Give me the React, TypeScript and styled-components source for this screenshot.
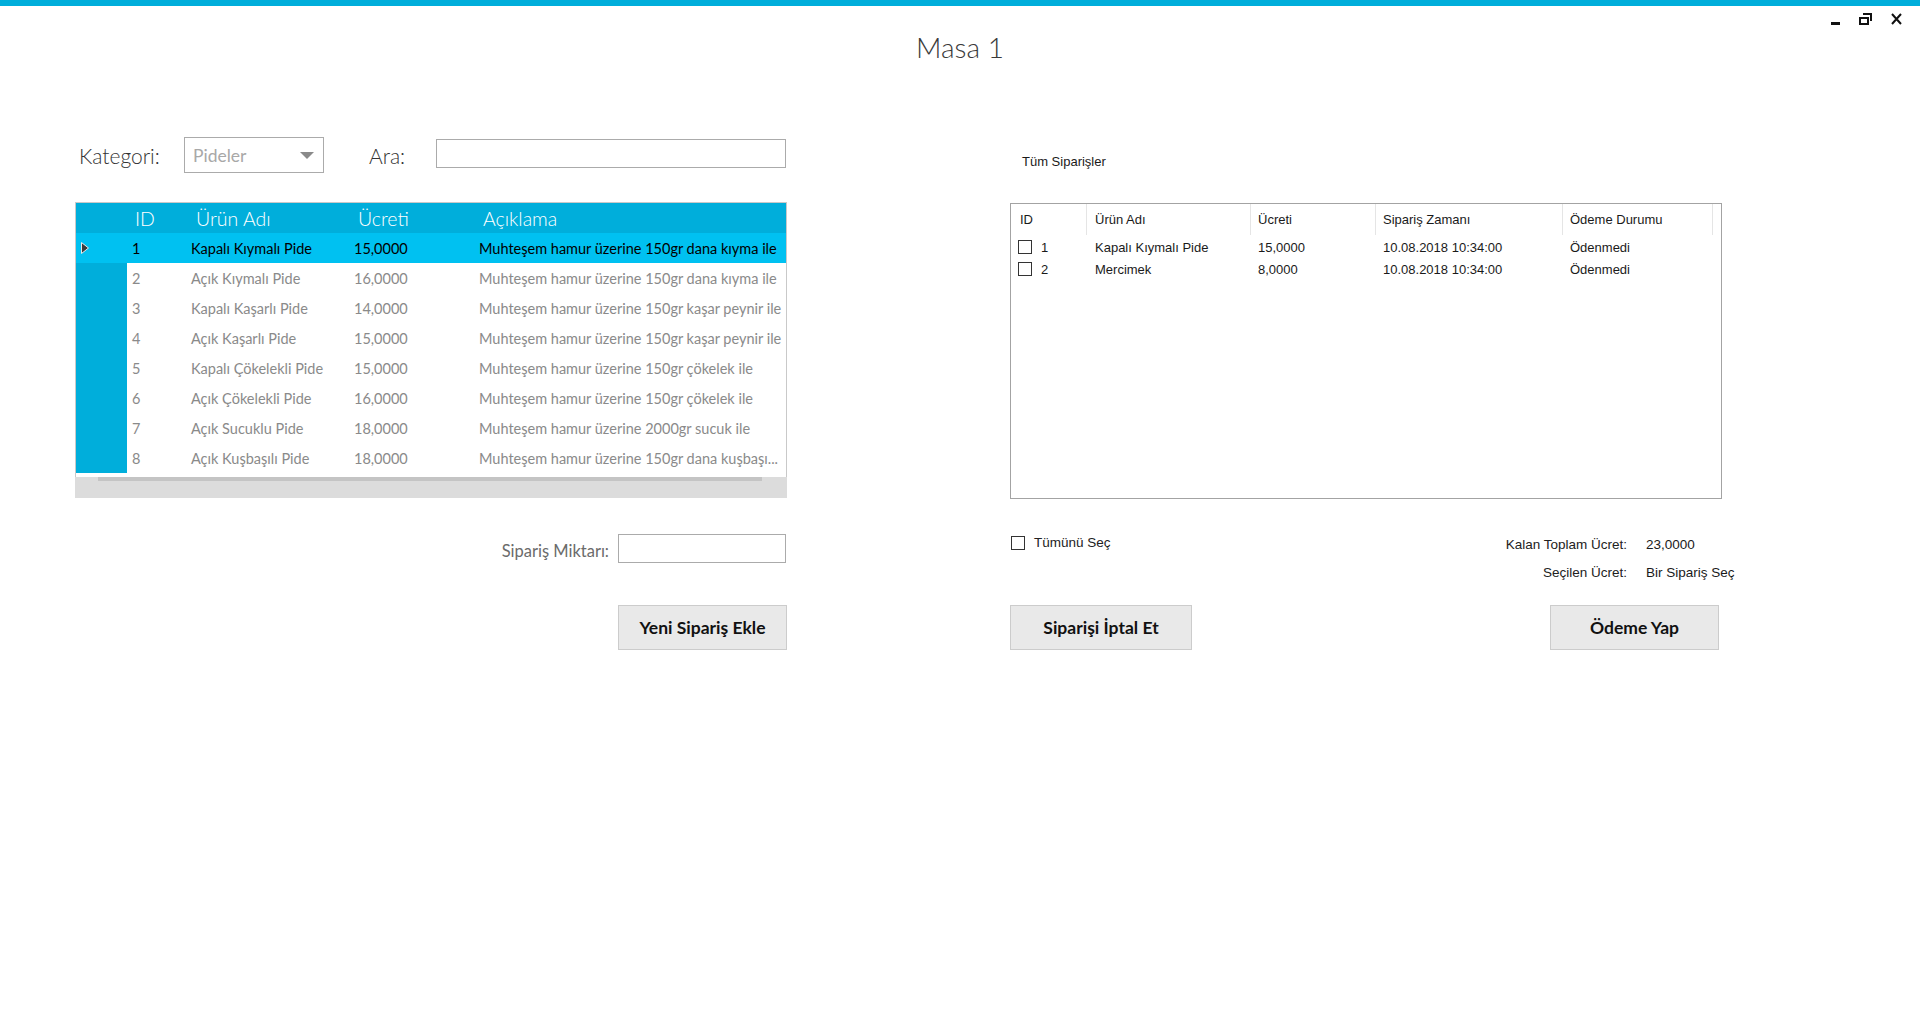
import React from "react"
import styled, { createGlobalStyle } from "styled-components"

const BLUE = "#00aedb"
const SELECTED = "#00c1f1"

const GlobalStyle = createGlobalStyle`
  html, body {
    margin: 0;
    padding: 0;
    background: #fff;
  }
  body {
    width: 1920px;
    height: 1030px;
    overflow: hidden;
    font-family: Lato, "Open Sans", sans-serif;
  }
  * {
    box-sizing: border-box;
  }
`

const products = [
  { id: 1, name: "Kapalı Kıymalı Pide", price: "15,0000", desc: "Muhteşem hamur üzerine 150gr dana kıyma ile" },
  { id: 2, name: "Açık Kıymalı Pide", price: "16,0000", desc: "Muhteşem hamur üzerine 150gr dana kıyma ile" },
  { id: 3, name: "Kapalı Kaşarlı Pide", price: "14,0000", desc: "Muhteşem hamur üzerine 150gr kaşar peynir ile" },
  { id: 4, name: "Açık Kaşarlı Pide", price: "15,0000", desc: "Muhteşem hamur üzerine 150gr kaşar peynir ile" },
  { id: 5, name: "Kapalı Çökelekli Pide", price: "15,0000", desc: "Muhteşem hamur üzerine 150gr çökelek ile" },
  { id: 6, name: "Açık Çökelekli Pide", price: "16,0000", desc: "Muhteşem hamur üzerine 150gr çökelek ile" },
  { id: 7, name: "Açık Sucuklu Pide", price: "18,0000", desc: "Muhteşem hamur üzerine 2000gr sucuk ile" },
  { id: 8, name: "Açık Kuşbaşılı Pide", price: "18,0000", desc: "Muhteşem hamur üzerine 150gr dana kuşbaşı..." },
]

const orders = [
  { id: 1, name: "Kapalı Kıymalı Pide", price: "15,0000", time: "10.08.2018 10:34:00", status: "Ödenmedi" },
  { id: 2, name: "Mercimek", price: "8,0000", time: "10.08.2018 10:34:00", status: "Ödenmedi" },
]

// list view column widths (px) and left padding
const lvCols = [
  { w: 76, pad: 9 },
  { w: 164, pad: 8 },
  { w: 125, pad: 7 },
  { w: 187, pad: 7 },
  { w: 150, pad: 7 },
]

const Window = styled.div`
  width: 1920px;
  height: 1030px;
  background: #fff;
`

const TopStripe = styled.div`
  height: 6px;
  background: ${BLUE};
`

const TitleRow = styled.div`
  display: grid;
  grid-template-columns: 1fr auto 1fr;
  height: 81px;
`

const Title = styled.h1`
  margin: 0;
  align-self: center;
  font-family: Lato, "Open Sans", sans-serif;
  font-weight: 300;
  font-size: 28px;
  color: #3a3a3a;
`

const WindowButtons = styled.div`
  justify-self: end;
  display: flex;
  align-items: flex-start;
  gap: 19px;
  margin-top: 7px;
  padding-right: 18px;
`

const Content = styled.div`
  display: flex;
  gap: 223px;
  padding-left: 75px;
`

const LeftPane = styled.div`
  width: 712px;
  display: flex;
  flex-direction: column;
`

const RightPane = styled.div`
  width: 722px;
  display: flex;
  flex-direction: column;
`

const FilterRow = styled.div`
  margin-top: 50px;
  height: 36px;
  display: flex;
  align-items: center;
`

const FieldLabel = styled.span<{ $width: number; $pad?: number; $ml?: number }>`
  width: ${p => p.$width}px;
  padding-left: ${p => p.$pad ?? 0}px;
  margin-left: ${p => p.$ml ?? 0}px;
  font-weight: 300;
  font-size: 21px;
  color: #333;
`

const ComboBox = styled.div`
  width: 140px;
  height: 36px;
  border: 1px solid #ababab;
  display: flex;
  align-items: center;
  justify-content: space-between;
  padding: 0 9px 0 8px;
  font-size: 17.5px;
  color: #a8a8a8;
`

const ComboArrow = styled.span`
  width: 0;
  height: 0;
  border-left: 7px solid transparent;
  border-right: 7px solid transparent;
  border-top: 7px solid #8a8a8a;
`

const TextBox = styled.div<{ $width: number }>`
  width: ${p => p.$width}px;
  height: 29px;
  border: 1px solid #ababab;
  background: #fff;
`

const SearchBox = styled(TextBox)`
  align-self: flex-start;
  margin-top: 2px;
`

const DataGrid = styled.div`
  margin-top: 29px;
  width: 712px;
  height: 296px;
  border: 1px solid #c9c9c9;
  border-bottom: none;
  display: flex;
  flex-direction: column;
`

const GridRow = styled.div<{ $bg: string; $header?: boolean }>`
  display: grid;
  grid-template-columns: 51px 59px 163px 125px 1fr;
  height: 30px;
  flex: none;
  align-items: center;
  background: ${p => p.$bg};
  font-size: ${p => (p.$header ? "19.5px" : "14.5px")};
  font-weight: ${p => (p.$header ? 300 : 400)};
`

const RowHead = styled.div<{ $bg: string }>`
  height: 100%;
  display: flex;
  align-items: center;
  padding-left: 4px;
  background: ${p => p.$bg};
`

const GridCell = styled.div<{ $pad: number; $color: string }>`
  padding-left: ${p => p.$pad}px;
  color: ${p => p.$color};
  white-space: nowrap;
  overflow: hidden;
`

const GridFill = styled.div`
  flex: 1;
`

const HScroll = styled.div`
  height: 21px;
  margin: 0 -1px;
  background: #dcdcdc;
  padding: 0 25px 0 23px;
`

const HScrollThumb = styled.div`
  height: 4px;
  background: #c4c4c4;
`

const QtyRow = styled.div`
  margin-top: 36px;
  display: flex;
  justify-content: flex-end;
  align-items: center;
  gap: 9px;
  padding-right: 1px;
`

const QtyLabel = styled.span`
  padding-top: 5px;
  font-size: 16.5px;
  color: #6b6b6b;
`

const ButtonRow = styled.div<{ $mt: number; $pr?: number; $justify: string }>`
  margin-top: ${p => p.$mt}px;
  display: flex;
  justify-content: ${p => p.$justify};
  padding-right: ${p => p.$pr ?? 0}px;
`

const ActionButton = styled.button<{ $width: number }>`
  width: ${p => p.$width}px;
  height: 45px;
  background: #e9e9e9;
  border: 1px solid #cccccc;
  font-family: Lato, "Open Sans", sans-serif;
  font-weight: 700;
  font-size: 17.5px;
  color: #111;
  padding: 0;
`

const WinText = styled.span<{ $size?: number }>`
  font-family: "Liberation Sans", Arial, sans-serif;
  font-size: ${p => p.$size ?? 13.5}px;
  color: #1a1a1a;
  white-space: nowrap;
`

const Caption = styled(WinText)`
  display: block;
  margin-top: 65px;
  height: 20px;
  line-height: 20px;
  padding-left: 12px;
`

const ListView = styled.div`
  margin-top: 31px;
  width: 712px;
  height: 296px;
  border: 1px solid #a3a3a3;
  background: #fff;
`

const LvHeader = styled.div`
  display: flex;
  height: 31px;
  margin-bottom: 1px;
`

const LvRow = styled.div`
  display: flex;
  height: 22px;
  align-items: center;
`

const LvCell = styled(WinText)<{ $w: number; $pad: number; $sep?: boolean }>`
  width: ${p => p.$w}px;
  height: 100%;
  display: flex;
  align-items: center;
  padding-left: ${p => p.$pad}px;
  border-right: ${p => (p.$sep ? "1px solid #e5e5e5" : "none")};
  overflow: hidden;
`

const CheckBox = styled.span`
  width: 14px;
  height: 14px;
  border: 1px solid #333;
  background: #fff;
  flex: none;
  margin-right: 9px;
`

const OptionsRow = styled.div`
  margin-top: 31px;
  display: flex;
  justify-content: space-between;
  align-items: flex-start;
`

const CheckLabel = styled(WinText)`
  height: 25px;
  display: flex;
  align-items: center;
  padding-left: 1px;
  color: #222;
`

const Summary = styled.div`
  display: grid;
  grid-template-columns: 125px 86px;
  grid-auto-rows: 28px;
  column-gap: 19px;
  align-items: center;
`

const SummaryLabel = styled(WinText)`
  text-align: right;
  color: #222;
`

const MinimizeIcon = () => (
  <svg width="9" height="12" viewBox="0 0 9 12">
    <rect x="0" y="9" width="9" height="3" fill="#111" />
  </svg>
)

const RestoreIcon = () => (
  <svg width="13" height="12" viewBox="0 0 13 12">
    <path d="M4 1h8v7" fill="none" stroke="#111" strokeWidth="2" />
    <rect x="1" y="5" width="8" height="6" fill="#fff" stroke="#111" strokeWidth="2" />
  </svg>
)

const CloseIcon = () => (
  <svg width="11" height="12" viewBox="0 0 11 12">
    <path d="M1 1l9 10M10 1L1 11" stroke="#111" strokeWidth="2" />
  </svg>
)

const SelectArrow = () => (
  <svg width="10" height="14" viewBox="0 0 10 14">
    <path d="M1.5 1.5l7 5.5-7 5.5z" fill="#3a3a3a" stroke="#e8e8e8" strokeWidth="1" />
  </svg>
)

const App: React.FC = () => {
  return (
    <Window>
      <GlobalStyle />
      <TopStripe />
      <TitleRow>
        <div />
        <Title>Masa 1</Title>
        <WindowButtons>
          <MinimizeIcon />
          <RestoreIcon />
          <CloseIcon />
        </WindowButtons>
      </TitleRow>

      <Content>
        <LeftPane>
          <FilterRow>
            <FieldLabel $width={109} $pad={4}>Kategori:</FieldLabel>
            <ComboBox>
              <span>Pideler</span>
              <ComboArrow />
            </ComboBox>
            <FieldLabel $width={67} $ml={45}>Ara:</FieldLabel>
            <SearchBox $width={350} />
          </FilterRow>

          <DataGrid>
            <GridRow $bg={BLUE} $header>
              <RowHead $bg={BLUE} />
              <GridCell $pad={8} $color="#fff">ID</GridCell>
              <GridCell $pad={10} $color="#fff">Ürün Adı</GridCell>
              <GridCell $pad={9} $color="#fff">Ücreti</GridCell>
              <GridCell $pad={9} $color="#fff">Açıklama</GridCell>
            </GridRow>
            {products.map((p, i) => {
              const selected = i === 0
              const color = selected ? "#000" : "#8a8a8a"
              return (
                <GridRow key={p.id} $bg={selected ? SELECTED : "#fff"}>
                  <RowHead $bg={selected ? SELECTED : BLUE}>{selected && <SelectArrow />}</RowHead>
                  <GridCell $pad={5} $color={color}>{p.id}</GridCell>
                  <GridCell $pad={5} $color={color}>{p.name}</GridCell>
                  <GridCell $pad={5} $color={color}>{p.price}</GridCell>
                  <GridCell $pad={5} $color={color}>{p.desc}</GridCell>
                </GridRow>
              )
            })}
            <GridFill />
            <HScroll>
              <HScrollThumb />
            </HScroll>
          </DataGrid>

          <QtyRow>
            <QtyLabel>Sipariş Miktarı:</QtyLabel>
            <TextBox $width={168} />
          </QtyRow>

          <ButtonRow $mt={42} $justify="flex-end">
            <ActionButton $width={169}>Yeni Sipariş Ekle</ActionButton>
          </ButtonRow>
        </LeftPane>

        <RightPane>
          <Caption $size={13}>Tüm Siparişler</Caption>
          <ListView>
            <LvHeader>
              {["ID", "Ürün Adı", "Ücreti", "Sipariş Zamanı", "Ödeme Durumu"].map((h, i) => (
                <LvCell key={h} $size={13} $w={lvCols[i].w} $pad={lvCols[i].pad} $sep>
                  {h}
                </LvCell>
              ))}
            </LvHeader>
            {orders.map(o => (
              <LvRow key={o.id}>
                <LvCell $size={13} $w={lvCols[0].w} $pad={7}>
                  <CheckBox />
                  {o.id}
                </LvCell>
                <LvCell $size={13} $w={lvCols[1].w} $pad={lvCols[1].pad}>{o.name}</LvCell>
                <LvCell $size={13} $w={lvCols[2].w} $pad={lvCols[2].pad}>{o.price}</LvCell>
                <LvCell $size={13} $w={lvCols[3].w} $pad={lvCols[3].pad}>{o.time}</LvCell>
                <LvCell $size={13} $w={lvCols[4].w} $pad={lvCols[4].pad}>{o.status}</LvCell>
              </LvRow>
            ))}
          </ListView>

          <OptionsRow>
            <CheckLabel>
              <CheckBox />
              Tümünü Seç
            </CheckLabel>
            <Summary>
              <SummaryLabel>Kalan Toplam Ücret:</SummaryLabel>
              <WinText>23,0000</WinText>
              <SummaryLabel>Seçilen Ücret:</SummaryLabel>
              <WinText>Bir Sipariş Seç</WinText>
            </Summary>
          </OptionsRow>

          <ButtonRow $mt={19} $pr={13} $justify="space-between">
            <ActionButton $width={182}>Siparişi İptal Et</ActionButton>
            <ActionButton $width={169}>Ödeme Yap</ActionButton>
          </ButtonRow>
        </RightPane>
      </Content>
    </Window>
  )
}

export default App
